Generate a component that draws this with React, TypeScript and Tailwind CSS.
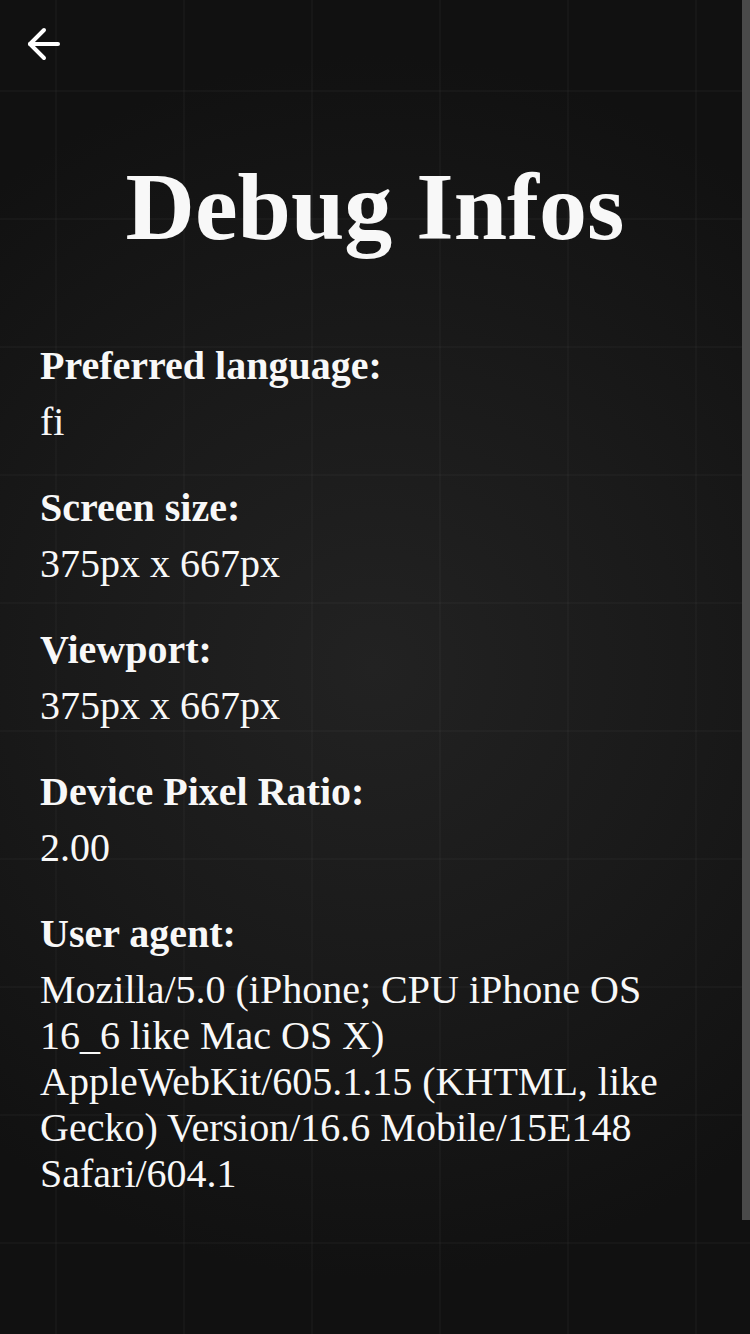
import React from "react";
import { ArrowLeft } from "lucide-react";

const items: { label: string; value: string }[] = [
  { label: "Preferred language:", value: "fi" },
  { label: "Screen size:", value: "375px x 667px" },
  { label: "Viewport:", value: "375px x 667px" },
  { label: "Device Pixel Ratio:", value: "2.00" },
  {
    label: "User agent:",
    value:
      "Mozilla/5.0 (iPhone; CPU iPhone OS 16_6 like Mac OS X) AppleWebKit/605.1.15 (KHTML, like Gecko) Version/16.6 Mobile/15E148 Safari/604.1",
  },
];

export default function App() {
  return (
    <div
      className="relative h-[1334px] w-[750px] overflow-hidden text-[#f8f8f8] bg-[linear-gradient(to_right,rgba(255,255,255,0.025)_2px,transparent_2px),linear-gradient(to_bottom,rgba(255,255,255,0.025)_2px,transparent_2px),radial-gradient(circle_at_50%_50%,#222222_0%,#1a1a1a_40%,#111111_80%)] bg-size-[128px_128px,128px_128px,100%_100%] bg-position-[55px_90px,55px_90px,0_0]"
      style={{ fontFamily: '"Liberation Serif", "Times New Roman", serif' }}
    >
      <div className="flex h-[88px] items-start">
        <button className="p-5 text-white" aria-label="Back">
          <ArrowLeft size={48} strokeWidth={2} />
        </button>
      </div>

      <h1 className="mt-[64px] text-center text-[96px] leading-[110px] font-bold">
        Debug Infos
      </h1>

      <div className="mt-[81px] flex flex-col gap-[40px] px-10">
        {items.map((it) => (
          <div key={it.label} className="flex flex-col gap-[10px]">
            <div className="text-[40px] leading-[46px] font-bold">{it.label}</div>
            <div className="text-[40px] leading-[46px]">{it.value}</div>
          </div>
        ))}
      </div>

      <div className="absolute right-0 top-0 h-[1220px] w-[8px] bg-[#4a4a4a]" />
    </div>
  );
}
